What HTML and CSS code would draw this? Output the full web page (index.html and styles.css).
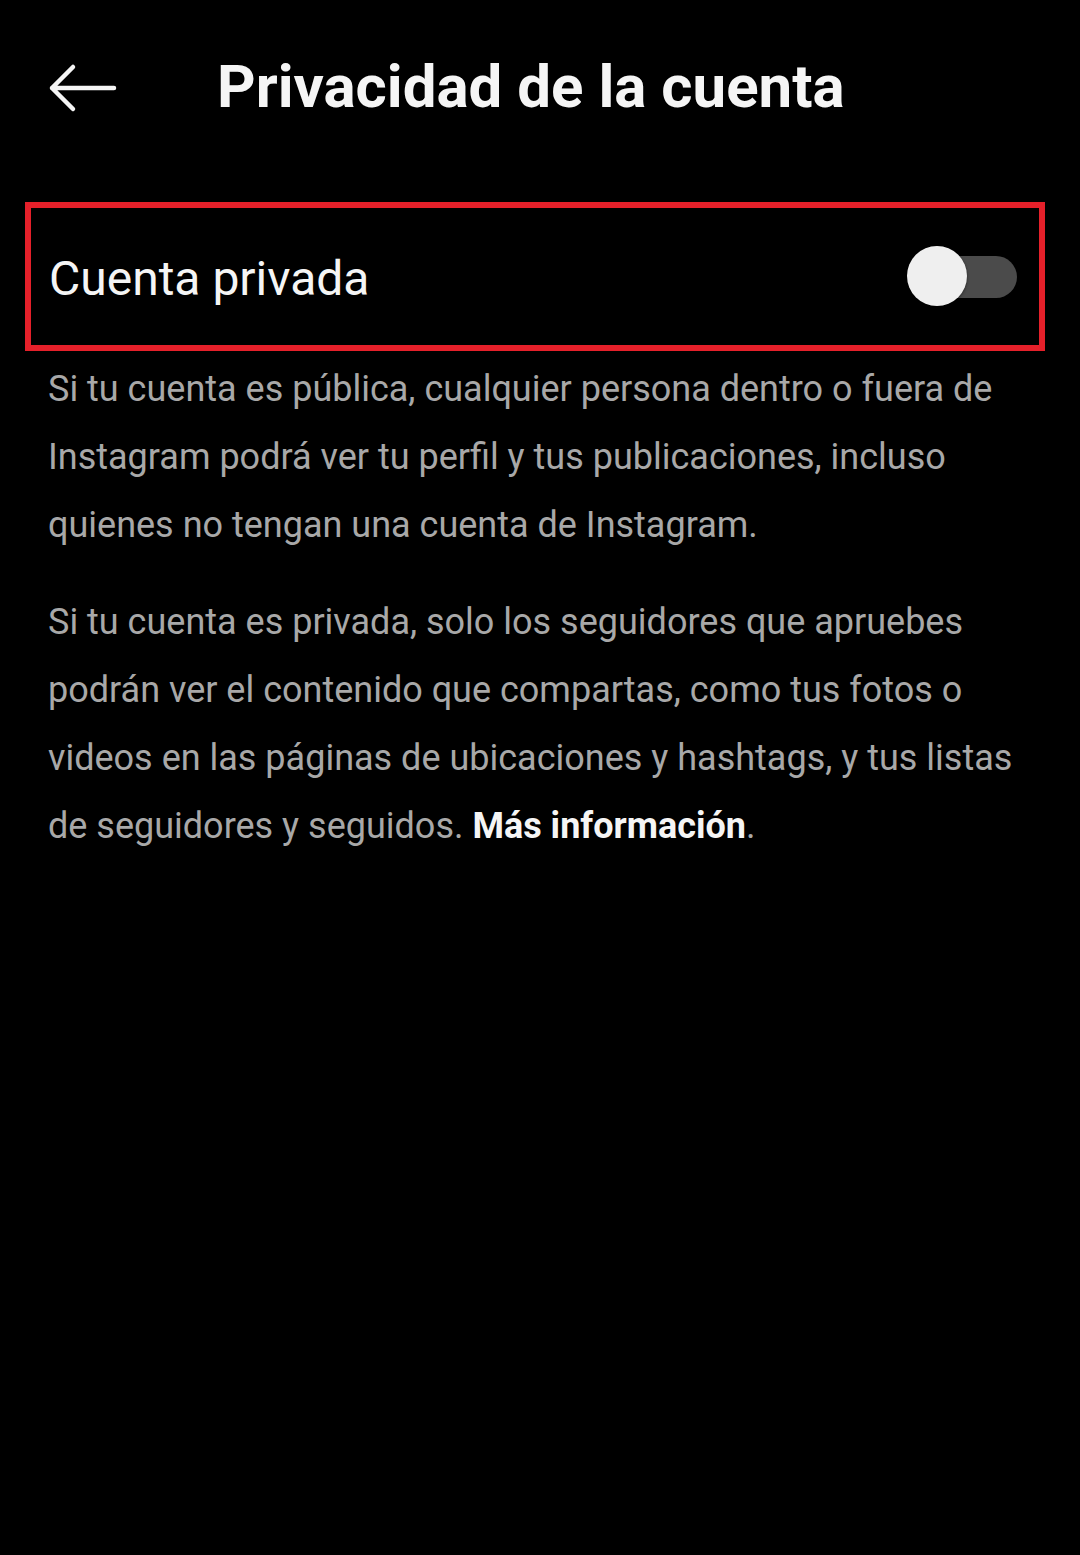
FILE: index.html
```html
<!DOCTYPE html>
<html lang="es">
<head>
    <title>Privacidad de la cuenta</title>
    <meta charset="UTF-8">
    <meta name="viewport" content="width=device-width, initial-scale=1.0">
    <link rel="stylesheet" href="styles.css">
</head>
<body>
    <header class="top-bar">
        <button class="back-btn" type="button" aria-label="Atrás">
            <svg width="70" height="50" viewBox="0 0 70 50">
                <path d="M66 25H4M25 4L4 25L25 46" fill="none" stroke="#f5f5f5" stroke-width="4.5" stroke-linecap="round" stroke-linejoin="round"/>
            </svg>
        </button>
        <h1 class="title">Privacidad de la cuenta</h1>
    </header>

    <section class="private-row">
        <span class="row-label">Cuenta privada</span>
        <div class="switch">
            <div class="switch-track"></div>
            <div class="switch-thumb"></div>
        </div>
    </section>

    <div class="info">
        <p>Si tu cuenta es pública, cualquier persona dentro o fuera de Instagram podrá ver tu perfil y tus publicaciones, incluso quienes no tengan una cuenta de Instagram.</p>
        <p>Si tu cuenta es privada, solo los seguidores que apruebes podrán ver el contenido que compartas, como tus fotos o videos en las páginas de ubicaciones y hashtags, y tus listas de seguidores y seguidos. <a href="#" class="more">Más información</a>.</p>
    </div>
</body>
</html>
```

FILE: styles.css
```css
body {
    margin: 0;
    background: #000;
    color: #f5f5f5;
    font-family: Roboto, "Noto Sans", sans-serif;
    min-height: 1555px;
}

.top-bar {
    display: flex;
    align-items: center;
    height: 172px;
    padding-left: 48px;
    box-sizing: border-box;
}

.back-btn {
    background: none;
    border: none;
    padding: 0;
    width: 70px;
    height: 50px;
    display: flex;
    margin-top: 4px;
}

.title {
    margin: 0 0 0 99px;
    font-size: 60px;
    font-weight: 700;
    color: #f5f5f5;
}

.private-row {
    margin: 30px 35px 0 25px;
    height: 149px;
    box-sizing: border-box;
    border: 6px solid #e5202a;
    display: flex;
    align-items: center;
    justify-content: space-between;
    padding: 0 22px 0 18px;
}

.row-label {
    font-size: 48px;
    color: #f5f5f5;
    margin-top: 4px;
}

.switch {
    position: relative;
    width: 110px;
    height: 62px;
}

.switch-track {
    position: absolute;
    left: 20px;
    right: 0;
    top: 10px;
    height: 42px;
    border-radius: 21px;
    background: #4b4b4b;
}

.switch-thumb {
    position: absolute;
    left: 0;
    top: 0;
    width: 60px;
    height: 60px;
    border-radius: 50%;
    background: #efefef;
    box-shadow: 0 1px 3px rgba(0, 0, 0, 0.5);
}

.info {
    padding: 4px 40px 0 48px;
}

.info p {
    margin: 0 0 29px 0;
    font-size: 36px;
    line-height: 68px;
    color: #a8a8a8;
}

.more {
    color: #f5f5f5;
    font-weight: 700;
    text-decoration: none;
}
```
